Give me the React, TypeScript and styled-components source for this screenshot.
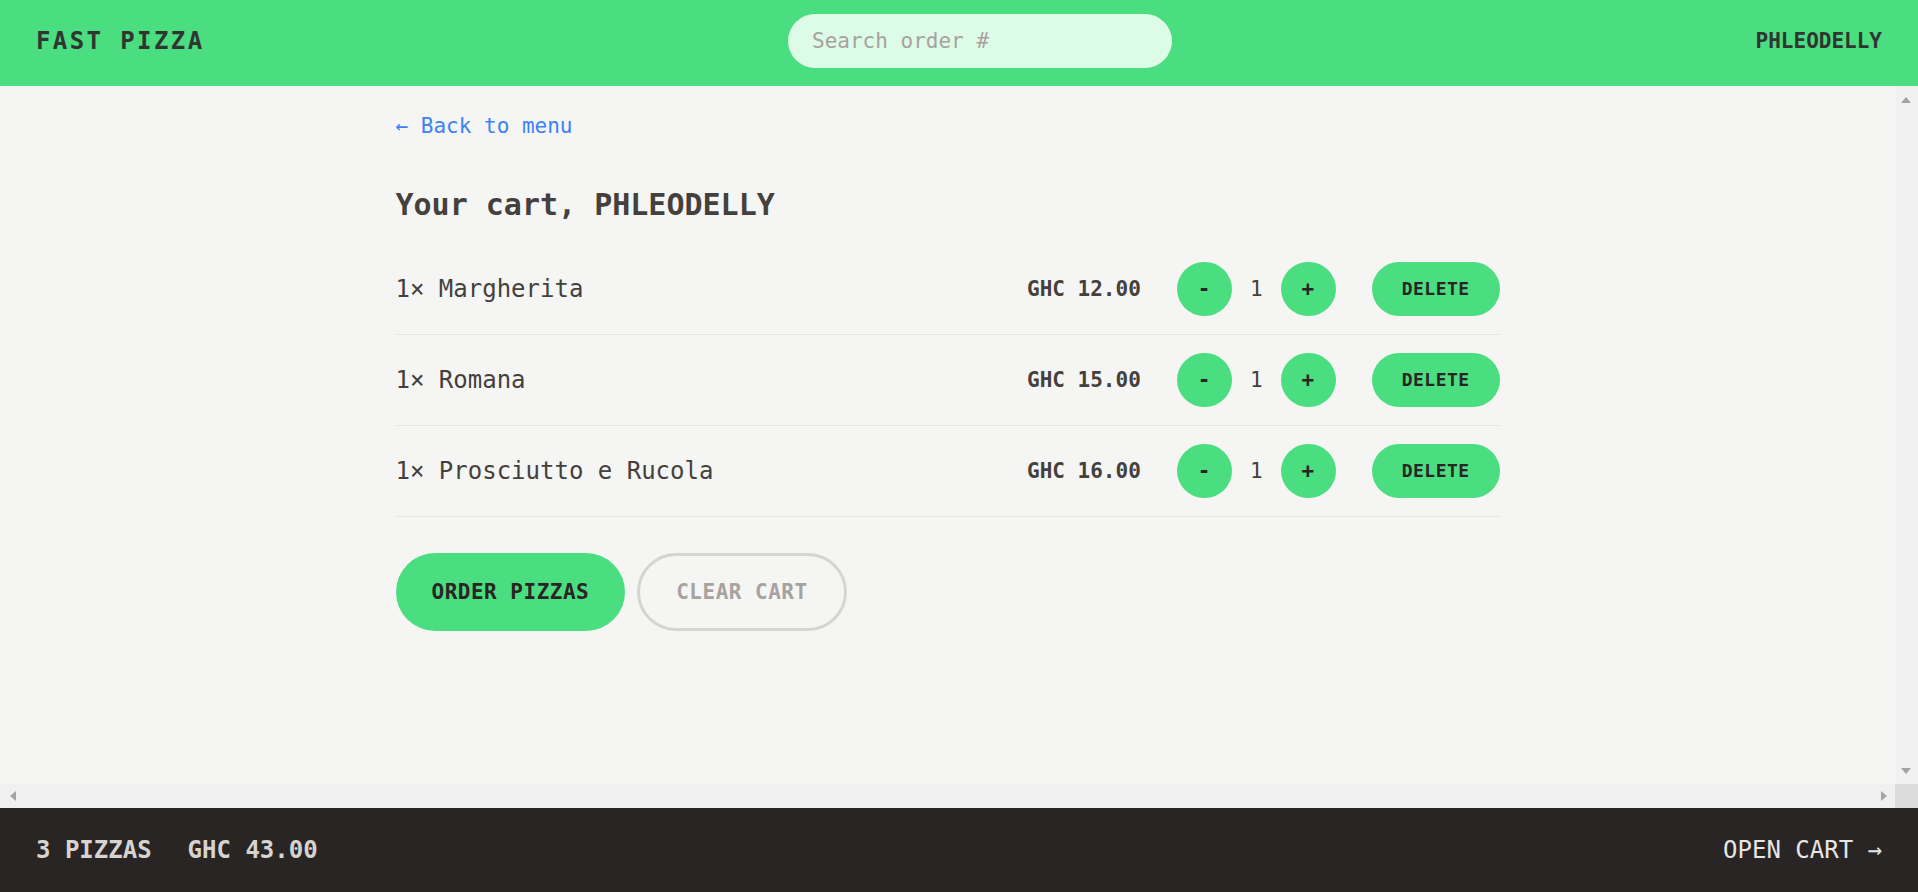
import React from "react";
import styled, { createGlobalStyle } from "styled-components";

const GlobalStyle = createGlobalStyle`
  *, *::before, *::after { box-sizing: border-box; }
  html, body { margin: 0; padding: 0; height: 100%; }
  body {
    font-family: "DejaVu Sans Mono", "Liberation Mono", monospace;
    background: #f5f5f4;
    color: #44403c;
    overflow: hidden;
  }
  #root { height: 100%; }
`;

const Layout = styled.div`
  display: grid;
  grid-template-rows: auto 1fr auto;
  height: 100vh;
`;

const Header = styled.header`
  display: flex;
  align-items: center;
  justify-content: space-between;
  height: 86px;
  padding: 14px 36px 18px;
  background: #4ade80;
  text-transform: uppercase;
  color: #2f3631;
`;

const Logo = styled.a`
  font-size: 24px;
  line-height: 36px;
  font-weight: 600;
  letter-spacing: 2.4px;
  color: inherit;
  text-decoration: none;
`;

const SearchInput = styled.input`
  width: 384px;
  height: 54px;
  border: none;
  outline: none;
  border-radius: 999px;
  background: #dcfce7;
  padding: 12px 24px;
  font-family: inherit;
  font-size: 21px;
  line-height: 30px;
  color: #44403c;
  &::placeholder { color: #a8a29e; }
`;

const UserName = styled.div`
  font-size: 21px;
  line-height: 30px;
  font-weight: 600;
`;

/* scroll area: content viewport plus its (classic) scrollbars */
const ScrollFrame = styled.div`
  display: grid;
  grid-template-columns: 1fr 23px;
  grid-template-rows: 1fr 24px;
  min-height: 0;
`;

const Viewport = styled.div`
  overflow: hidden;
  min-height: 0;
  background: #f5f5f4;
`;

const VBar = styled.div`
  display: flex;
  flex-direction: column;
  justify-content: space-between;
  background: #f1f1f1;
  border-left: 1px solid #f6f6f6;
`;

const HBar = styled.div`
  display: flex;
  justify-content: space-between;
  background: #f0f0f0;
`;

const Corner = styled.div`
  background: #dcdcdc;
`;

const ArrowButton = styled.div<{ $pad: string; $h?: number }>`
  display: flex;
  align-items: flex-start;
  width: 22px;
  height: ${(p) => p.$h ?? 23}px;
  padding: ${(p) => p.$pad};
  svg { display: block; fill: #a3a3a3; }
`;

const Main = styled.main`
  max-width: 1152px;
  margin: 0 auto;
`;

const Cart = styled.div`
  padding: 22px 24px 18px;
`;

const BackLink = styled.a`
  display: block;
  font-size: 21px;
  line-height: 36px;
  color: #3b82f6;
  text-decoration: none;
`;

const Title = styled.h2`
  margin: 40px 0 0;
  font-size: 30px;
  line-height: 42px;
  font-weight: 600;
  color: #44403c;
`;

const List = styled.ul`
  list-style: none;
  margin: 18px 0 0;
  padding: 0;
  border-bottom: 1px solid #e7e5e4;
`;

const Item = styled.li`
  display: flex;
  align-items: center;
  justify-content: space-between;
  padding: 18px 0;
  & + & { border-top: 1px solid #e7e5e4; }
`;

const ItemName = styled.p`
  margin: 0;
  font-size: 24px;
  line-height: 36px;
`;

const ItemControls = styled.div`
  display: flex;
  align-items: center;
  gap: 36px;
`;

const Price = styled.p`
  margin: 0;
  font-size: 21px;
  line-height: 30px;
  font-weight: 700;
  color: #44403c;
`;

const Quantity = styled.div`
  display: flex;
  align-items: center;
  gap: 18px;
`;

const Count = styled.span`
  font-size: 21px;
  line-height: 30px;
  font-weight: 500;
`;

const BaseButton = styled.button`
  display: inline-block;
  border: none;
  border-radius: 999px;
  background: #4ade80;
  color: #292524;
  font-family: inherit;
  font-weight: 600;
  text-transform: uppercase;
  cursor: pointer;
`;

const RoundButton = styled(BaseButton)`
  font-size: 21px;
  line-height: 30px;
  padding: 12px 21px;
  letter-spacing: 0.5px;
`;

const SmallButton = styled(BaseButton)`
  font-size: 18px;
  line-height: 24px;
  padding: 15px 30px;
  letter-spacing: 0.45px;
`;

const Actions = styled.div`
  display: flex;
  gap: 12px;
  margin-top: 36px;
`;

const PrimaryButton = styled(BaseButton)`
  font-size: 21px;
  line-height: 30px;
  padding: 24px 36px;
  letter-spacing: 0.5px;
`;

const SecondaryButton = styled(BaseButton)`
  background: transparent;
  border: 3px solid #d6d3d1;
  color: #a8a29e;
  font-size: 21px;
  line-height: 30px;
  padding: 21px 36px;
  letter-spacing: 0.5px;
`;

const Footer = styled.footer`
  display: flex;
  align-items: center;
  justify-content: space-between;
  padding: 24px 36px;
  background: #292524;
  color: #e7e5e4;
  font-size: 24px;
  line-height: 36px;
  text-transform: uppercase;
`;

const Summary = styled.p`
  display: flex;
  gap: 36px;
  margin: 0;
  font-weight: 600;
  color: #d6d3d1;
`;

const OpenCart = styled.a`
  color: #e7e5e4;
  text-decoration: none;
`;

type CartItem = { name: string; price: number; qty: number };

const items: CartItem[] = [
  { name: "Margherita", price: 12, qty: 1 },
  { name: "Romana", price: 15, qty: 1 },
  { name: "Prosciutto e Rucola", price: 16, qty: 1 },
];

const Up = () => (
  <svg width="10" height="6" viewBox="0 0 10 6"><polygon points="5,0 10,6 0,6" /></svg>
);
const Down = () => (
  <svg width="10" height="6" viewBox="0 0 10 6"><polygon points="0,0 10,0 5,6" /></svg>
);
const Left = () => (
  <svg width="6" height="10" viewBox="0 0 6 10"><polygon points="6,0 6,10 0,5" /></svg>
);
const Right = () => (
  <svg width="6" height="10" viewBox="0 0 6 10"><polygon points="0,0 6,5 0,10" /></svg>
);

export default function App() {
  const total = items.reduce((s, i) => s + i.price * i.qty, 0);
  const count = items.reduce((s, i) => s + i.qty, 0);
  return (
    <>
      <GlobalStyle />
      <Layout>
        <Header>
          <Logo href="#">Fast Pizza</Logo>
          <form onSubmit={(e) => e.preventDefault()}>
            <SearchInput placeholder="Search order #" />
          </form>
          <UserName>phleodelly</UserName>
        </Header>
        <ScrollFrame>
          <Viewport>
            <Main>
              <Cart>
                <BackLink href="#">← Back to menu</BackLink>
                <Title>Your cart, PHLEODELLY</Title>
                <List>
                  {items.map((it) => (
                    <Item key={it.name}>
                      <ItemName>
                        {it.qty}× {it.name}
                      </ItemName>
                      <ItemControls>
                        <Price>GHC {(it.price * it.qty).toFixed(2)}</Price>
                        <Quantity>
                          <RoundButton>-</RoundButton>
                          <Count>{it.qty}</Count>
                          <RoundButton>+</RoundButton>
                        </Quantity>
                        <SmallButton>Delete</SmallButton>
                      </ItemControls>
                    </Item>
                  ))}
                </List>
                <Actions>
                  <PrimaryButton>Order pizzas</PrimaryButton>
                  <SecondaryButton>Clear cart</SecondaryButton>
                </Actions>
              </Cart>
            </Main>
          </Viewport>
          <VBar>
            <ArrowButton $pad="11px 0 0 5px"><Up /></ArrowButton>
            <ArrowButton $pad="7px 0 0 5px"><Down /></ArrowButton>
          </VBar>
          <HBar>
            <ArrowButton $pad="7px 0 0 10px" $h={24}><Left /></ArrowButton>
            <ArrowButton $pad="7px 0 0 8px" $h={24}><Right /></ArrowButton>
          </HBar>
          <Corner />
        </ScrollFrame>
        <Footer>
          <Summary>
            <span>{count} pizzas</span>
            <span>GHC {total.toFixed(2)}</span>
          </Summary>
          <OpenCart href="#">Open cart →</OpenCart>
        </Footer>
      </Layout>
    </>
  );
}
